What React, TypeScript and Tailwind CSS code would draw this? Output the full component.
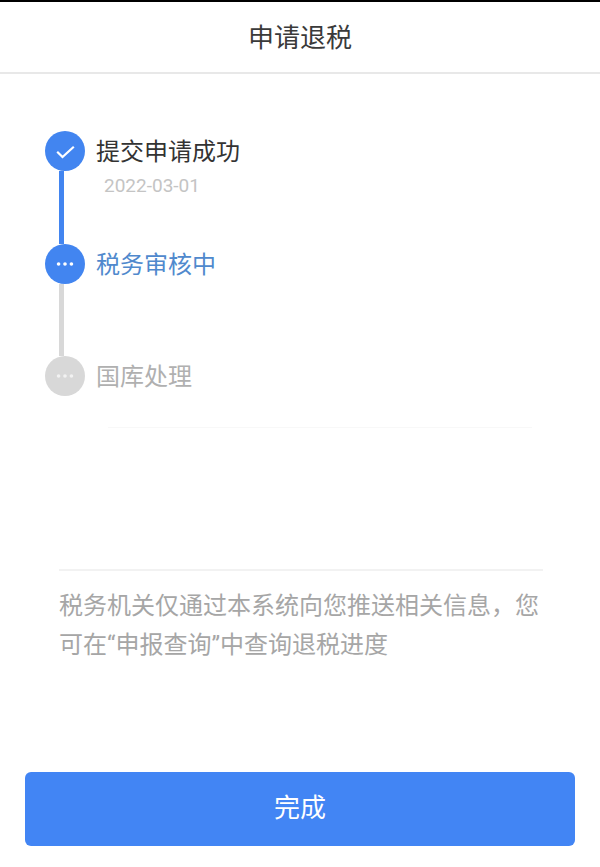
import { Ellipsis } from "lucide-react";

const cjk = "font-['Noto_Sans_CJK_SC','Noto_Sans',sans-serif]";

const steps = [
  {
    label: "提交申请成功",
    date: "2022-03-01",
    icon: "check",
    circle: "bg-[#4285f0]",
    iconClass: "text-white",
    text: "text-[#333333]",
    line: "bg-[#4285f0]",
  },
  {
    label: "税务审核中",
    icon: "dots",
    circle: "bg-[#4285f0]",
    iconClass: "text-white",
    text: "text-[#5089cd]",
    line: "bg-[#d8d8d8]",
  },
  {
    label: "国库处理",
    icon: "dots",
    circle: "bg-[#d8d8d8]",
    iconClass: "text-[#f2f2f2]",
    text: "text-[#b0b0b0]",
  },
];

export default function App() {
  return (
    <div className={`flex h-[867px] w-[600px] flex-col bg-white ${cjk}`}>
      <div className="h-[2px] bg-black" />
      <header className="flex h-[72px] items-center justify-center border-b-2 border-[#e8e8e8] pb-[3px] text-[26px] text-[#3a3a3a]">
        申请退税
      </header>

      <div className="flex flex-col pl-[44.5px] pt-[57px]">
        {steps.map((step) => (
          <div key={step.label} className="flex gap-[11.5px]">
            <div className="flex w-[40px] flex-col">
              <div
                className={`flex h-[40px] w-[40px] items-center justify-center rounded-full ${step.circle}`}
              >
                {step.icon === "check" ? (
                  <svg width="20" height="16" viewBox="0 0 20 16" fill="none" className={step.iconClass}>
                    <path d="M2.2 8.7 L7.5 14 L18.8 3.7" stroke="currentColor" strokeWidth="2.2" />
                  </svg>
                ) : (
                  <Ellipsis size={22} strokeWidth={2} className={step.iconClass} />
                )}
              </div>
              {step.line ? (
                <div className={`ml-[14.5px] h-[72.5px] w-[5px] ${step.line}`} />
              ) : null}
            </div>
            <div className="flex flex-col">
              <div className={`h-[40px] text-[24px] leading-[38px] ${step.text}`}>
                {step.label}
              </div>
              {step.date ? (
                <div className="ml-[8px] mt-[3px] font-['Roboto',sans-serif] text-[19px] leading-[24px] text-[#c4c4c4]">
                  {step.date}
                </div>
              ) : null}
            </div>
          </div>
        ))}
      </div>

      <div className="ml-[108px] mt-[31px] h-px w-[424px] bg-[#f8f8f8]" />

      <div className="mx-[59px] mt-[141px] h-[2px] w-[484px] bg-[#f2f2f2]" />
      <p className="mx-[59px] mt-[16px] font-['Roboto','Noto_Sans_CJK_SC',sans-serif] text-[24px] leading-[39px] text-[#a6a6a6]">
        {"税务机关仅通过本系统向您推送相关信息\uFF0C您可在“申报查询”中查询退税进度"}
      </p>

      <div className="mt-auto px-[25px] pb-[21px]">
        <button
          type="button"
          className="h-[74px] w-[550px] rounded-[6px] bg-[#4285f4] pb-[7px] text-[26px] text-white"
        >
          完成
        </button>
      </div>
    </div>
  );
}
